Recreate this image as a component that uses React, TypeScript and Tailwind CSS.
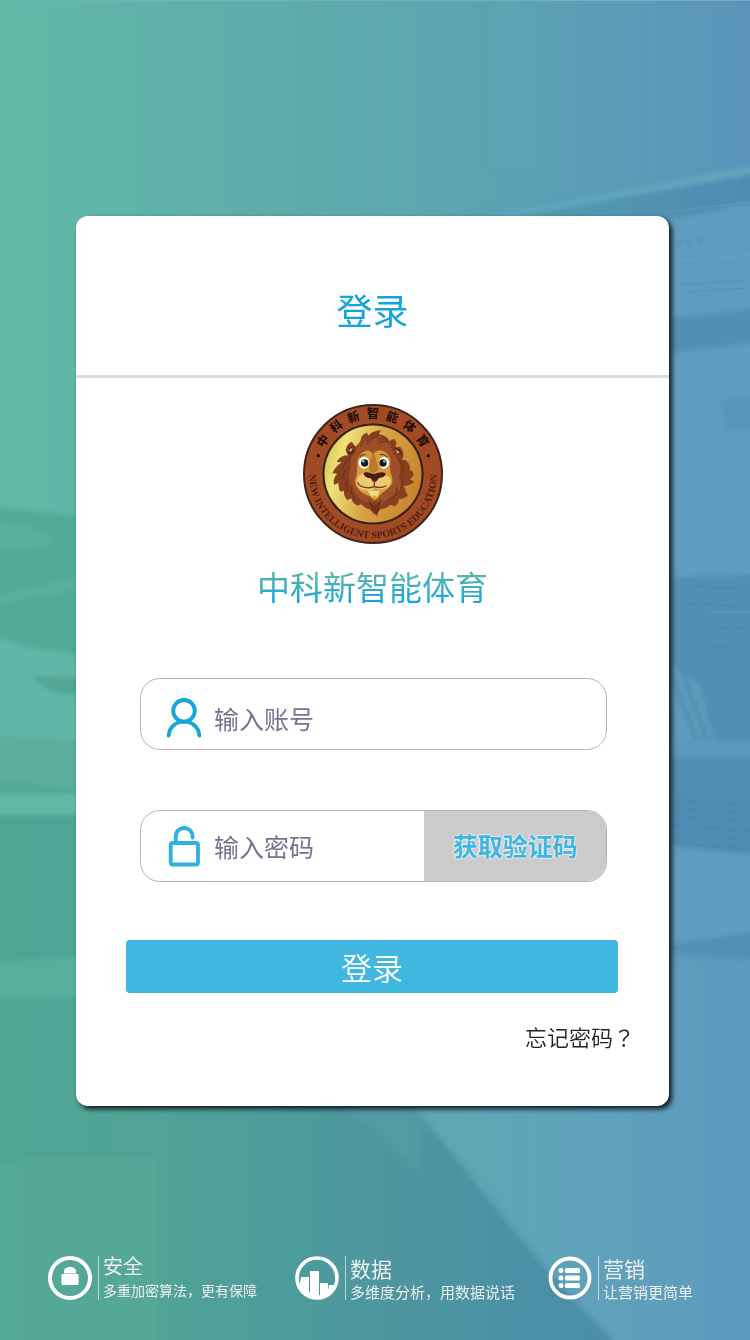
import React from "react";

const RING_CHARS = ["中", "科", "新", "智", "能", "体", "育"];

function Backdrop() {
  return (
    <svg
      aria-hidden="true"
      className="absolute inset-0 h-full w-full"
      viewBox="0 0 750 1340"
      preserveAspectRatio="none"
    >
      <defs>
        <linearGradient id="sky" x1="0" y1="0" x2="1" y2="0">
          <stop offset="0" stopColor="#60baa6" />
          <stop offset="0.25" stopColor="#60b0aa" />
          <stop offset="0.5" stopColor="#5da9af" />
          <stop offset="0.75" stopColor="#5c9fb5" />
          <stop offset="1" stopColor="#5a94bb" />
        </linearGradient>
        <linearGradient id="shade" gradientUnits="userSpaceOnUse" x1="0" y1="0" x2="620" y2="0">
          <stop offset="0" stopColor="#50a594" />
          <stop offset="0.25" stopColor="#51a397" />
          <stop offset="0.6" stopColor="#4d979f" />
          <stop offset="1" stopColor="#4c8caa" />
        </linearGradient>
        <linearGradient id="light" gradientUnits="userSpaceOnUse" x1="420" y1="0" x2="750" y2="0">
          <stop offset="0" stopColor="#60a8b0" />
          <stop offset="0.5" stopColor="#5fa2ba" />
          <stop offset="1" stopColor="#5d9ac0" />
        </linearGradient>
        <linearGradient id="beam" gradientUnits="userSpaceOnUse" x1="450" y1="0" x2="750" y2="0">
          <stop offset="0" stopColor="#599fae" />
          <stop offset="0.4" stopColor="#5497ae" />
          <stop offset="1" stopColor="#4f8cb3" />
        </linearGradient>
        <filter id="soft" x="-5%" y="-5%" width="110%" height="110%">
          <feGaussianBlur stdDeviation="2" />
        </filter>
      </defs>
      <rect width="750" height="1340" fill="url(#sky)" />
      <rect width="750" height="1" fill="#78afbb" />
      <g filter="url(#soft)">
        <path d="M302 0H314V216H302Z" fill="#4f9ca3" opacity=".12" />
        <path d="M492 0H534V170H492Z" fill="#66abb8" opacity=".18" />
        <path d="M640 205H760V950H640Z" fill="#5e9dc0" />
        <path d="M450 218L760 165V201L640 226H450Z" fill="url(#beam)" />
        <path d="M470 218L760 164V173L510 218Z" fill="#61a4bd" />
        <path d="M660 320L760 308V342L660 354Z" fill="#528fb4" />
        <path d="M720 400L760 397V430H727Z" fill="#5695bb" />
        <path d="M660 578L760 574V770L660 742Z" fill="#518fb3" />
        <path d="M668 662L700 684L714 742L670 740Z" fill="#5d9bbc" />
        <path d="M670 673L698 742M680 666L708 742" stroke="#528fb1" strokeWidth="5" />
        <path d="M660 740H760V758H660Z" fill="#5a99bc" />
        <path d="M660 758H760V860L660 846Z" fill="#508db2" />
        <path d="M660 845L760 856V935L660 946Z" fill="#5e9dc0" />
        <path d="M660 946L760 931V960L660 950Z" fill="#528fb6" />
        <path d="M-10 507L90 517V670L-10 660Z" fill="#55a998" />
        <path d="M-10 520C30 525 60 530 50 545C30 555 -10 550 -10 550ZM-10 596L90 575V588L-10 605Z" fill="#5aaf9e" />
        <path d="M-10 635L5 640L30 648L65 652L90 662V745H-10Z" fill="#60b7a7" />
        <path d="M30 676L90 678V695H65L45 688Z" fill="#54a697" />
        <path d="M-10 735L90 741V795L-10 781Z" fill="#5cae9e" />
        <path d="M-10 781L90 789V795H-10Z" fill="#55a899" />
        <path d="M-10 795L90 793V818H-10Z" fill="#60b8a6" />
        <path d="M-10 815H90V1100H405C450 1142 510 1240 622 1350H-10Z" fill="url(#shade)" />
        <path d="M405 1100C460 1130 500 1220 625 1350H760V960H640V1100Z" fill="url(#light)" />
        <path d="M340 1106C370 1120 400 1160 420 1172L425 1106Z" fill="#55a0a5" opacity=".5" />
        <path d="M-10 1167L30 1158H158V1350H-10Z" fill="#5aae9c" opacity=".4" />
        {/* bright desk edge beside the keyboard */}
        <path d="M-10 962L90 956V998H-10Z" fill="#5cb19f" opacity=".7" />
      </g>
      <g stroke="#74b4ce" strokeWidth="1.5" opacity=".25">
        <path d="M665 212L750 202M666 262L750 255M710 612H750" />
      </g>
      <g fill="none" stroke="#4280a5" opacity=".3">
        <path d="M676 241l3 5 4-5zM685 240l3 5 4-5zM697 238l3 6 4-6zM680 285l68-5M684 292l62-4" />
        <path
          d="M674 800l76 5M674 808l76 5M674 816l76 6M674 825l76 6M674 834l76 6M674 843l76 6M696 586l50 4M690 603l58 4M700 626l48 3M712 646l36 3"
          strokeDasharray="9 3 4 2"
          strokeWidth="2"
        />
      </g>
    </svg>
  );
}

function LionLogo() {
  return (
    <svg
      role="img"
      aria-label="中科新智能体育"
      className="size-[140px]"
      viewBox="30 30 420 420"
    >
      <defs>
        <linearGradient id="gold" x1="0" y1="0.2" x2="1" y2="0.5">
          <stop offset="0" stopColor="#d9c04d" />
          <stop offset="0.2" stopColor="#ede27a" />
          <stop offset="0.55" stopColor="#d9a243" />
          <stop offset="1" stopColor="#c8842f" />
        </linearGradient>
        <path id="ringArc" d="M50 213A192 192 0 1 0 430 213" />
      </defs>
      <circle cx="240" cy="240" r="207" fill="#a24a24" stroke="#42231a" strokeWidth="6" />
      <circle cx="240" cy="240" r="149" fill="url(#gold)" stroke="#3d2014" strokeWidth="7" />
      <circle cx="240" cy="240" r="154" fill="none" stroke="#9a642e" strokeWidth="2" />
      <g
        fill="#24110d"
        fontFamily="Noto Sans CJK SC, sans-serif"
        fontSize="36"
        fontWeight="900"
        textAnchor="middle"
      >
        {RING_CHARS.map((char, i) => (
          <text key={char} x="240" y="73" transform={`rotate(${(i - 3) * 18.8} 240 240)`}>
            {char}
          </text>
        ))}
      </g>
      <circle cx="76" cy="185" r="5" fill="#24110d" />
      <circle cx="406" cy="185" r="5" fill="#24110d" />
      <text
        fill="#4a1d14"
        fontFamily="Liberation Serif, serif"
        fontSize="30"
        fontWeight="700"
        textAnchor="middle"
      >
        <textPath href="#ringArc" startOffset="50%">
          NEW INTELLIGENT SPORTS EDUCATION
        </textPath>
      </text>
      <path
        fill="#86401f"
        d="M188 158L176 143Q160 150 158 170L166 184Q143 182 131 204L146 205Q124 220 118 238L133 239Q119 252 123 272L137 267Q135 283 143 293L153 290Q151 307 163 318L175 313Q178 329 194 335L205 331Q216 345 230 346Q238 358 252 366Q253 354 263 345Q282 344 291 332L305 337Q318 328 318 315Q337 315 345 303L338 295Q339 284 332 276Q348 276 364 264L350 255Q367 247 359 232L351 229Q353 207 336 198L327 197Q338 178 322 158L306 160Q316 145 303 134L289 141Q282 124 257 121L265 109Q238 110 226 125L222 116Q204 120 202 143Z"
      />
      <path
        fill="#9d4f27"
        d="M195 157Q200 132 226 130Q216 140 220 148Q238 124 270 125Q254 132 252 143Q274 132 291 151L302 182Q331 211 316 252Q338 276 306 301Q278 318 263 335L249 320L228 327Q193 318 180 285Q158 256 174 220Q168 192 195 157Z"
      />
      <path
        fill="none"
        stroke="#6d2e18"
        strokeWidth="3"
        d="M202 159Q207 137 226 130M222 151Q235 132 258 127M254 148Q273 139 285 146M173 191Q152 205 151 225M164 218Q146 240 154 258M166 253Q153 273 166 291M177 278Q169 301 190 317M315 195Q337 216 328 239M318 244Q338 262 322 282M311 281Q315 307 291 315"
      />
      <path fill="#602918" d="M163 180Q164 158 185 155L179 171L190 166L178 184Z" />
      <path fill="#e5a08c" d="M167 169L180 160L174 174Z" />
      <path fill="#602918" d="M302 160Q326 161 326 183L312 178Z" />
      <path fill="#f0bc98" d="M307 166L321 176L313 178Z" />
      <path
        fill="#d69b3d"
        d="M193 217Q190 182 217 171Q230 166 240 181Q254 163 276 174Q297 187 291 216Q290 231 296 247Q304 270 284 284Q264 298 253 314L244 319L232 307Q205 300 193 281Q181 265 191 243Z"
      />
      <path
        fill="#edcb72"
        d="M210 238Q186 252 190 270Q197 289 225 290Q240 293 246 282Q261 293 282 282Q302 264 289 249Q276 241 266 239Z"
      />
      <path fill="#efd98a" d="M224 291L260 290L253 310L243 303L238 312Z" />
      <path fill="#bc7730" d="M237 179L244 181L255 216Q256 235 242 236Q226 235 229 213Z" />
      <path
        fill="none"
        stroke="#7d3d1f"
        strokeWidth="4"
        d="M200 190Q206 180 218 182M261 182Q274 178 284 190"
      />
      <ellipse cx="213" cy="206" rx="16" ry="18" fill="#fff" />
      <ellipse cx="273" cy="206" rx="15" ry="18" fill="#fff" />
      <circle cx="215" cy="207" r="11" fill="#171719" />
      <circle cx="270" cy="207" r="11" fill="#171719" />
      <circle cx="211" cy="202" r="4" fill="#8bbbd0" />
      <circle cx="274" cy="202" r="4" fill="#8bbbd0" />
      <path
        fill="#4c1c13"
        d="M211 239Q217 232 232 237Q242 241 254 237Q271 232 278 239Q276 250 258 252L249 263H240L233 253Q216 252 211 239Z"
      />
      <path
        fill="none"
        stroke="#713b23"
        strokeWidth="4"
        strokeLinecap="round"
        d="M244 260V278M244 278Q223 286 203 276Q195 271 194 265M244 278Q262 284 279 276"
      />
      <path fill="#733018" d="M225 315L244 338L266 315L259 344L252 361L235 345Z" />
    </svg>
  );
}

function UserIcon() {
  return (
    <svg
      aria-hidden="true"
      className="h-10 w-9 shrink-0"
      viewBox="0 0 36 40"
      fill="none"
      stroke="#12a6da"
      strokeWidth="3.8"
      strokeLinecap="round"
    >
      <circle cx="18" cy="12.800" r="10.800" />
      <path d="M2.700 37.500C3.200 29.200 9.600 23.700 18 23.700S32.800 29.200 33.300 37.500" />
    </svg>
  );
}

function UnlockIcon() {
  return (
    <svg
      aria-hidden="true"
      className="h-[42px] w-9 shrink-0"
      viewBox="0 0 36 42"
      fill="none"
      stroke="#2db1de"
      strokeWidth="3.800"
      strokeLinecap="round"
    >
      <rect x="4.700" y="18" width="27.300" height="21.500" rx="2" />
      <path d="M9.800 17V11.500C9.800 6.500 13.500 3 18.200 3C23 3 26.600 6.500 26.600 11.500V12.500" />
    </svg>
  );
}

function LockBadge() {
  return (
    <svg aria-hidden="true" className="size-11 shrink-0" viewBox="0 0 44 44">
      <circle cx="22" cy="22" r="20" fill="none" stroke="#fff" strokeWidth="4" />
      <path fill="#fff" d="M16 17.500V15.500C16 12.500 18.500 11 22 11S28 12.500 28 15.500V17.500Z" />
      <rect x="13.500" y="18" width="17" height="11" rx="1" fill="#fff" />
    </svg>
  );
}

function ChartBadge() {
  return (
    <svg aria-hidden="true" className="size-11 shrink-0" viewBox="0 0 44 44">
      <defs>
        <clipPath id="disc">
          <circle cx="22" cy="22" r="21" />
        </clipPath>
      </defs>
      <circle cx="22" cy="22" r="20" fill="none" stroke="#fff" strokeWidth="3.600" />
      <path
        fill="#fff"
        clipPath="url(#disc)"
        d="M6 21H14V36H15V15H24V39H25V27H33V34L34 29H40V44H12L4 33Z"
      />
    </svg>
  );
}

function ListBadge() {
  return (
    <svg aria-hidden="true" className="size-11 shrink-0" viewBox="0 0 44 44">
      <circle cx="22" cy="22" r="19.500" fill="none" stroke="#fff" strokeWidth="3.800" />
      <g fill="#fff">
        <circle cx="13" cy="14.500" r="2.500" />
        <circle cx="13" cy="22" r="2.500" />
        <circle cx="13" cy="29.500" r="2.500" />
        <rect x="17" y="12" width="15" height="5" rx="1.500" />
        <rect x="17" y="19.500" width="15" height="5" rx="1.500" />
        <rect x="17" y="27" width="15" height="5" rx="1.500" />
      </g>
    </svg>
  );
}

type FeatureProps = {
  icon: React.ReactNode;
  title: string;
  text: string;
  compact?: boolean;
};

function Feature({ icon, title, text, compact }: FeatureProps) {
  return (
    <li className="flex items-center whitespace-nowrap text-[#eeeeee]">
      {icon}
      <span aria-hidden="true" className="mr-1 ml-[6px] h-11 w-px bg-white/60" />
      <div className={compact ? "" : "pt-1"}>
        <h2 className={compact ? "text-xl leading-6" : "text-[21px] leading-6"}>{title}</h2>
        <p className={compact ? "text-sm leading-6" : "text-[15px] leading-6"}>{text}</p>
      </div>
    </li>
  );
}

export default function App() {
  return (
    <div
      lang="zh-CN"
      className="relative isolate flex min-h-screen flex-col justify-between overflow-hidden font-['Noto_Sans_CJK_SC',sans-serif]"
    >
      <Backdrop />
      <main className="relative mt-[216px] mr-[81px] ml-[76px] rounded-xl bg-white pb-[53px] shadow-[3px_3px_5px_0px_rgba(10,20,30,0.95)]">
        <header className="border-b-[3px] border-[#dcdcdc] pt-[69px] pb-[42px] text-center">
          <h1 className="text-4xl leading-[48px] text-[#12a5da]">登录</h1>
        </header>

        <div className="flex flex-col items-center pt-[26px]">
          <LionLogo />
          <p className="mt-[18px] bg-linear-to-b from-[#5cb7a0] from-20% to-[#10a5dc] to-80% bg-clip-text text-[33px] leading-[48px] text-transparent">
            中科新智能体育
          </p>
        </div>

        <form className="mt-[68px]" onSubmit={(e) => e.preventDefault()}>
          <div className="mr-[62px] ml-[64px] flex h-[72px] items-center gap-3 rounded-[20px] border border-[#b4b4b4] pt-2 pr-4 pl-[25px]">
            <label htmlFor="account" aria-label="账号">
              <UserIcon />
            </label>
            <input
              id="account"
              type="text"
              placeholder="输入账号"
              className="h-10 w-full min-w-0 bg-transparent text-[25px] text-[#77728f] outline-none placeholder:text-[#77728f]"
            />
          </div>

          <div className="mt-[60px] mr-[62px] ml-[64px] flex h-[72px] overflow-hidden rounded-[20px] border border-[#b4b4b4]">
            <div className="flex min-w-0 flex-1 items-center gap-3 pl-[25px]">
              <label htmlFor="password" aria-label="密码">
                <UnlockIcon />
              </label>
              <input
                id="password"
                type="password"
                placeholder="输入密码"
                className="h-10 w-full min-w-0 bg-transparent text-[25px] text-[#77728f] outline-none placeholder:text-[#77728f]"
              />
            </div>
            <button
              type="button"
              className="w-[182px] shrink-0 bg-[#cbcbcb] text-[25px] font-bold text-[#3eb6e0] [text-shadow:0_0_2px_#fff,0_0_2px_#fff,0_0_1px_#fff]"
            >
              获取验证码
            </button>
          </div>

          <div className="mt-[58px] mr-[51px] ml-[50px]">
            <button
              type="submit"
              className="h-[53px] w-full rounded bg-[#3fb7e1] text-[31px] leading-[53px] font-[350] text-white"
            >
              登录
            </button>
          </div>

          <div className="mt-[26px] mr-[34px] text-right">
            <a href="#forgot" className="block text-[22px] leading-[34px] font-[350] text-[#222222]">
              忘记密码<span className="font-['Noto_Sans_CJK_TC',sans-serif]" lang="zh-TW">？</span>
            </a>
          </div>
        </form>
      </main>

      <footer className="relative pt-10 pb-9">
        <ul className="grid grid-cols-[247fr_253fr_154fr] items-center px-12">
          <Feature compact icon={<LockBadge />} title="安全" text="多重加密算法，更有保障" />
          <Feature icon={<ChartBadge />} title="数据" text="多维度分析，用数据说话" />
          <Feature icon={<ListBadge />} title="营销" text="让营销更简单" />
        </ul>
      </footer>
    </div>
  );
}
